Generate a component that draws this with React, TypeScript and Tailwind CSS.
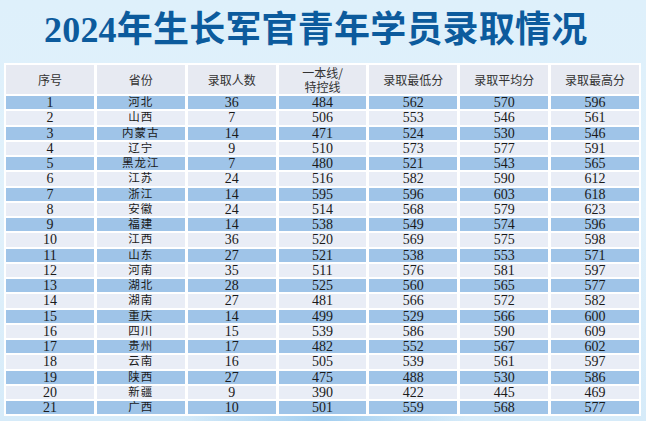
import React from 'react'

const headers = ['序号', '省份', '录取人数', '一本线/\n特控线', '录取最低分', '录取平均分', '录取最高分']

const rows: [string, string, number, number, number, number, number][] = [
  ['1', '河北', 36, 484, 562, 570, 596],
  ['2', '山西', 7, 506, 553, 546, 561],
  ['3', '内蒙古', 14, 471, 524, 530, 546],
  ['4', '辽宁', 9, 510, 573, 577, 591],
  ['5', '黑龙江', 7, 480, 521, 543, 565],
  ['6', '江苏', 24, 516, 582, 590, 612],
  ['7', '浙江', 14, 595, 596, 603, 618],
  ['8', '安徽', 24, 514, 568, 579, 623],
  ['9', '福建', 14, 538, 549, 574, 596],
  ['10', '江西', 36, 520, 569, 575, 598],
  ['11', '山东', 27, 521, 538, 553, 571],
  ['12', '河南', 35, 511, 576, 581, 597],
  ['13', '湖北', 28, 525, 560, 565, 577],
  ['14', '湖南', 27, 481, 566, 572, 582],
  ['15', '重庆', 14, 499, 529, 566, 600],
  ['16', '四川', 15, 539, 586, 590, 609],
  ['17', '贵州', 17, 482, 552, 567, 602],
  ['18', '云南', 16, 505, 539, 561, 597],
  ['19', '陕西', 27, 475, 488, 530, 586],
  ['20', '新疆', 9, 390, 422, 445, 469],
  ['21', '广西', 10, 501, 559, 568, 577],
]

export default function App() {
  return (
    <div className="w-[646px] h-[421px] overflow-hidden flex flex-col bg-gradient-to-b from-[#def0fb] via-[#e1f1fb] to-[#d6ebf9]">
      {/* Title */}
      <div className="h-[63px] shrink-0 pl-[44px] pt-[10px]">
        <h1
          className="text-[36px] leading-[40px] font-bold text-[#0c5b9d] tracking-[0.2px] whitespace-nowrap"
          style={{ fontFamily: '"Liberation Serif", "Noto Sans CJK SC", serif' }}
        >
          2024年生长军官青年学员录取情况
        </h1>
      </div>

      {/* Table */}
      <div className="ml-[4px] w-[637px] shrink-0 bg-white p-[2px]">
        <div className="grid grid-cols-7 gap-x-[3px]">
          {headers.map((h) => (
            <div
              key={h}
              className="h-[29px] bg-[#e7eaf2] flex items-center justify-center text-center text-[12px] leading-[14px] text-[#333] whitespace-pre-line"
              style={{ fontFamily: '"Noto Sans CJK SC", sans-serif' }}
            >
              {h}
            </div>
          ))}
        </div>
        <div className="flex flex-col gap-y-[2px] mt-[2px]">
          {rows.map((r, i) => (
            <div key={r[0]} className="grid grid-cols-7 gap-x-[3px]">
              {r.map((c, j) => (
                <div
                  key={j}
                  className={`h-[13.25px] flex items-center justify-center text-[#1a1a1a] leading-[13px] ${
                    i % 2 === 0 ? 'bg-[#9fc4e8]' : 'bg-[#e9edf6]'
                  } ${j === 1 ? 'text-[11.5px] tracking-[1px]' : 'text-[14px]'}`}
                  style={{ fontFamily: '"Liberation Serif", "Noto Sans CJK SC", serif' }}
                >
                  {c}
                </div>
              ))}
            </div>
          ))}
        </div>
      </div>

      {/* bottom swirl */}
      <div className="mt-auto mx-[180px] h-[5px] shrink-0 bg-gradient-to-r from-transparent via-[#8ec3ec] to-transparent opacity-70" />
    </div>
  )
}
